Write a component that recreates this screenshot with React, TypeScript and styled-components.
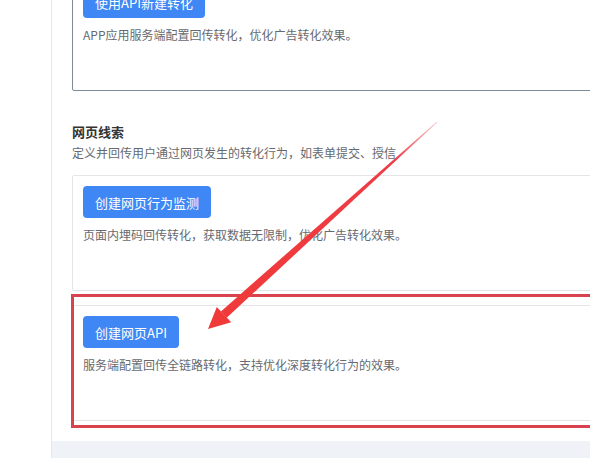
import React from "react";
import styled, { createGlobalStyle } from "styled-components";

const Global = createGlobalStyle`
  html, body { margin: 0; padding: 0; background: #ffffff; }
  body { font-family: "Noto Sans CJK SC", "Noto Sans", sans-serif; overflow: hidden; }
  #root { width: 590px; height: 458px; overflow: hidden; position: relative; }
`;

const Page = styled.div`
  display: flex;
  width: 590px;
  height: 458px;
  overflow: hidden;
`;

const Sidebar = styled.aside`
  width: 51px;
  flex: none;
  background: #ffffff;
  border-right: 1px solid #e6e8eb;
`;

const Main = styled.main`
  flex: 1;
  background: #eff2f6;
  min-width: 0;
`;

const Panel = styled.div`
  background: #ffffff;
  margin-top: -25px;
  padding: 0 0 20px 20px;
  width: 560px;
`;

const Card = styled.div<{ $active?: boolean }>`
  position: relative;
  box-sizing: border-box;
  height: 116px;
  padding: 10px 10px 0 10px;
  border: 1px solid ${(p) => (p.$active ? "#7e8c9a" : "#e3e5e8")};
  border-radius: 2px;
  & + & { margin-top: 14px; }
`;

const Button = styled.button`
  display: inline-flex;
  align-items: center;
  height: 32px;
  padding: 0 12px;
  border: none;
  border-radius: 4px;
  background: #3f87f4;
  color: #ffffff;
  font-family: "Noto Sans CJK SC", sans-serif;
  font-size: 13px;
  cursor: pointer;
`;

const Desc = styled.p`
  margin: 7px 0 0 0;
  font-size: 12px;
  line-height: 20px;
  color: #666a70;
`;

const Section = styled.section`
  margin-top: 31px;
`;

const Title = styled.h3`
  margin: 0;
  font-size: 13px;
  line-height: 20px;
  font-weight: 700;
  color: #333;
`;

const Sub = styled.p`
  margin: 1px 0 12px 0;
  font-size: 12px;
  line-height: 20px;
  color: #666a70;
`;

const Highlight = styled.div`
  position: absolute;
  top: -12px;
  left: -2px;
  right: -40px;
  bottom: -8px;
  border: 3px solid #d8434f;
  pointer-events: none;
`;

const Overlay = styled.svg`
  position: absolute;
  left: 0;
  top: 0;
  pointer-events: none;
`;

export default function App() {
  return (
    <>
      <Global />
      <Page>
        <Sidebar />
        <Main>
          <Panel>
            <Card $active>
              <Button>使用API新建转化</Button>
              <Desc>APP应用服务端配置回传转化，优化广告转化效果。</Desc>
            </Card>
            <Section>
              <Title>网页线索</Title>
              <Sub>定义并回传用户通过网页发生的转化行为，如表单提交、授信</Sub>
              <Card>
                <Button>创建网页行为监测</Button>
                <Desc>页面内埋码回传转化，获取数据无限制，优化广告转化效果。</Desc>
              </Card>
              <Card>
                <Highlight />
                <Button>创建网页API</Button>
                <Desc>服务端配置回传全链路转化，支持优化深度转化行为的效果。</Desc>
              </Card>
            </Section>
          </Panel>
        </Main>
      </Page>
      <Overlay width="590" height="458" viewBox="0 0 590 458">
        <defs>
          <linearGradient id="shaft" x1="437" y1="122" x2="224" y2="315" gradientUnits="userSpaceOnUse">
            <stop offset="0" stopColor="#f7c4cb" />
            <stop offset="0.2" stopColor="#ee3b45" />
            <stop offset="1" stopColor="#f03a3a" />
          </linearGradient>
        </defs>
        <polygon points="437.3,122.3 436.7,121.7 220.9,311.4 226.7,317.8" fill="url(#shaft)" />
        <polygon points="208,329 216.8,306.9 231.2,322.3" fill="#f03a3a" />
      </Overlay>
    </>
  );
}
